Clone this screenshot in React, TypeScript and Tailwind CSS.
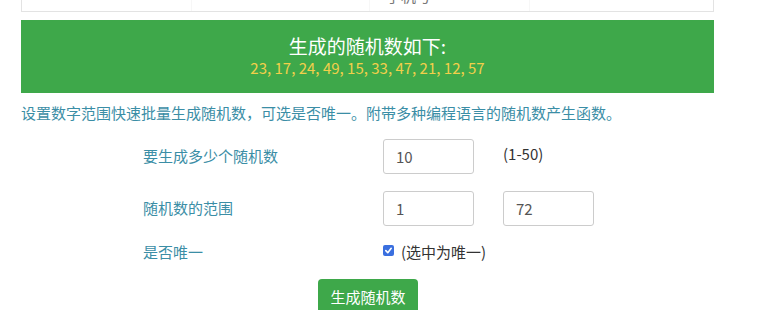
import React from "react";

const nums = [23, 17, 24, 49, 15, 33, 47, 21, 12, 57];

export default function App() {
  return (
    <div
      className="w-[773px] h-[310px] overflow-hidden bg-white"
      style={{ fontFamily: '"Noto Sans CJK SC", "Noto Sans", sans-serif' }}
    >
      <div className="ml-[21px] w-[693px]">
        {/* tail of the table above */}
        <div className="relative h-[12px] border border-t-0 border-[#e3e3e3] overflow-hidden">
          <div className="absolute left-[169px] top-0 h-full border-l border-[#f7f7f7]" />
          <div className="absolute left-[347px] top-0 h-full border-l border-[#f7f7f7]" />
          <div className="absolute left-[507px] top-0 h-full border-l border-[#f7f7f7]" />
          <span className="absolute left-[364px] top-[-14px] text-[15px] leading-[20px] text-[#777]">
            手机号
          </span>
        </div>

        {/* result panel */}
        <div className="mt-[8px] h-[73px] bg-[#3ea84a] flex flex-col items-center justify-center">
          <div className="text-[19px] leading-[24px] text-white">生成的随机数如下:</div>
          <div className="text-[15px] leading-[19px] text-[#f2cf4a] mb-[2px]">
            {nums.join(", ")}
          </div>
        </div>

        <p className="mt-[10px] text-[15px] leading-[20px] text-[#3b8ea6]">
          设置数字范围快速批量生成随机数，可选是否唯一。附带多种编程语言的随机数产生函数。
        </p>

        {/* form */}
        <div className="mt-[16px] flex flex-col gap-[17px] text-[15px]">
          <div className="flex items-center h-[35px]">
            <label className="w-[362px] pl-[122px] text-[#3b8ea6]">要生成多少个随机数</label>
            <input
              defaultValue="10"
              className="w-[91px] h-[35px] border border-[#ccc] rounded-[3px] px-[12px] text-[#555] outline-none"
            />
            <span className="ml-[29px] mb-[4px] text-[#333]">(1-50)</span>
          </div>
          <div className="flex items-center h-[35px]">
            <label className="w-[362px] pl-[122px] text-[#3b8ea6]">随机数的范围</label>
            <input
              defaultValue="1"
              className="w-[91px] h-[35px] border border-[#ccc] rounded-[3px] px-[12px] text-[#555] outline-none"
            />
            <input
              defaultValue="72"
              className="ml-[29px] w-[91px] h-[35px] border border-[#ccc] rounded-[3px] px-[12px] text-[#555] outline-none"
            />
          </div>
        </div>

        <div className="mt-[16px] flex items-center h-[20px] text-[15px]">
          <label className="w-[362px] pl-[122px] text-[#3b8ea6]">是否唯一</label>
          <span className="w-[11px] h-[11px] rounded-[2px] bg-[#3a6fdf] flex items-center justify-center mb-[3px]">
            <svg width="9" height="9" viewBox="0 0 10 10" fill="none">
              <path d="M2 5.2 L4.2 7.4 L8 2.6" stroke="white" strokeWidth="1.8" strokeLinecap="round" strokeLinejoin="round" />
            </svg>
          </span>
          <span className="ml-[7px] text-[#333]">(选中为唯一)</span>
        </div>

        <div className="mt-[17px] flex">
          <button className="ml-[297px] w-[100px] h-[40px] rounded-[4px] bg-[#3ea84a] text-white text-[15px] pb-[4px]">
            生成随机数
          </button>
        </div>
      </div>
    </div>
  );
}
